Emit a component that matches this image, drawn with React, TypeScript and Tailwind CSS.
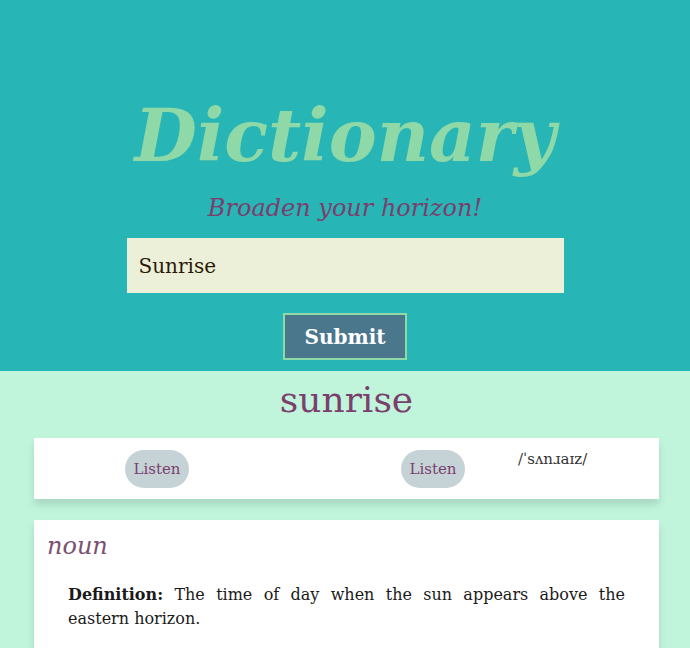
export default function App() {
  return (
    <div className="min-h-screen bg-[#c0f5dc] font-['DejaVu_Serif',serif]">
      {/* Header with search */}
      <header className="bg-[#27b5b5] pt-[92px] pb-[11px] flex flex-col items-center">
        <h1 className="text-[72px] leading-[88px] font-bold italic text-[#8fd9a8]">
          Dictionary
        </h1>
        <p className="mt-[12px] text-[24px] leading-[32px] italic text-[#7b3f6e]">
          Broaden your horizon!
        </p>
        <form className="mt-[14px] flex flex-col items-center">
          <input
            type="text"
            defaultValue="Sunrise"
            className="w-[437px] h-[55px] bg-[#ecf0d8] px-3 text-[20px] text-[#2b1a0a] outline-none"
          />
          <button
            type="submit"
            className="mt-[20px] w-[124px] h-[47px] border-2 border-[#8fd9a8] bg-[#4b778d] text-white text-[20px] font-bold"
          >
            Submit
          </button>
        </form>
      </header>

      {/* Results */}
      <main className="pl-[34px] pr-[31px] pb-6">
        <h2 className="text-center text-[36px] leading-[58px] text-[#7b3f6e]">sunrise</h2>

        <section className="mt-[9px] bg-white h-[61px] shadow-[0_6px_8px_rgba(0,0,0,0.12)] flex items-start pt-[12px] pl-[91px]">
          <button className="w-[64px] h-[38px] rounded-[19px] bg-[#c5d2d6] text-[15px] text-[#7b3f6e]">
            Listen
          </button>
          <button className="ml-[212px] w-[64px] h-[38px] rounded-[19px] bg-[#c5d2d6] text-[15px] text-[#7b3f6e]">
            Listen
          </button>
          <span className="ml-[53px] text-[15px] leading-[18px] text-[#333]">/ˈsʌnɹaɪz/</span>
        </section>

        <section className="mt-[21px] bg-white shadow-[0_6px_8px_rgba(0,0,0,0.12)] pt-[10px] px-[13px] pb-6">
          <h3 className="text-[24px] leading-[32px] italic text-[#7b5070]">noun</h3>
          <p className="mt-[21px] px-[21px] text-[16px] leading-[24px] text-justify text-[#1a1a1a]">
            <strong>Definition:</strong> The time of day when the sun appears above the eastern horizon.
          </p>
        </section>
      </main>
    </div>
  );
}
